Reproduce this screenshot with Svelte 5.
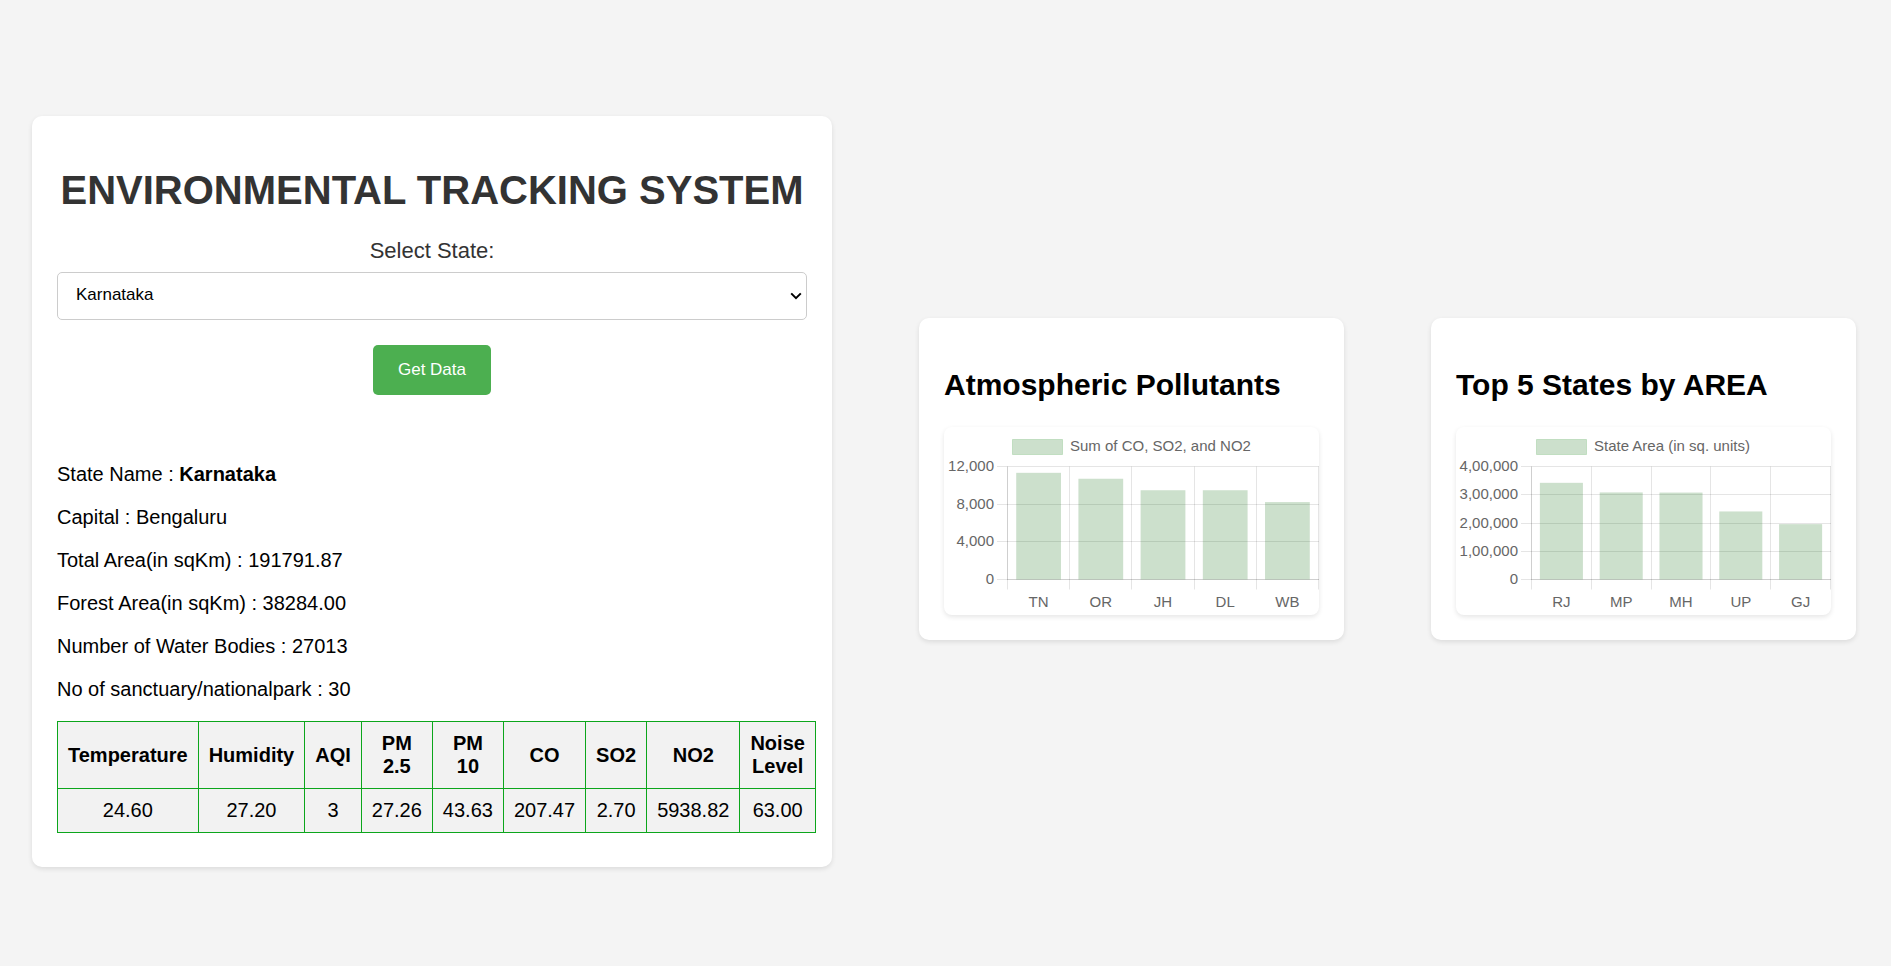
<script>
  const states = ['Karnataka', 'Kerala', 'Tamil Nadu', 'Rajasthan', 'Odisha'];
  let selected = $state('Karnataka');

  const facts = [
    ['Capital', 'Bengaluru'],
    ['Total Area(in sqKm)', '191791.87'],
    ['Forest Area(in sqKm)', '38284.00'],
    ['Number of Water Bodies', '27013'],
    ['No of sanctuary/nationalpark', '30']
  ];

  const readings = [
    ['Temperature', '24.60'],
    ['Humidity', '27.20'],
    ['AQI', '3'],
    ['PM 2.5', '27.26'],
    ['PM 10', '43.63'],
    ['CO', '207.47'],
    ['SO2', '2.70'],
    ['NO2', '5938.82'],
    ['Noise Level', '63.00']
  ];

  const W = 375;
  const TOP = 39.5;
  const BASE = 152.5;

  const charts = [
    {
      title: 'Atmospheric Pollutants',
      legend: 'Sum of CO, SO2, and NO2',
      legendX: 68,
      left: 63,
      max: 12000,
      ticks: [[12000, '12,000'], [8000, '8,000'], [4000, '4,000'], [0, '0']],
      bars: [['TN', 11330], ['OR', 10700], ['JH', 9480], ['DL', 9480], ['WB', 8220]]
    },
    {
      title: 'Top 5 States by AREA',
      legend: 'State Area (in sq. units)',
      legendX: 80,
      left: 75,
      max: 400000,
      ticks: [[400000, '4,00,000'], [300000, '3,00,000'], [200000, '2,00,000'], [100000, '1,00,000'], [0, '0']],
      bars: [['RJ', 342239], ['MP', 308245], ['MH', 307713], ['UP', 240928], ['GJ', 196024]]
    }
  ];

  const yOf = (c, v) => BASE - (v / c.max) * (BASE - TOP);
  const step = (c) => (W - 1 - c.left) / c.bars.length;
</script>

<main>
  <section class="card panel">
    <h1>ENVIRONMENTAL TRACKING SYSTEM</h1>
    <form onsubmit={(e) => e.preventDefault()}>
      <label for="state">Select State:</label>
      <select id="state" bind:value={selected}>
        {#each states as s}
          <option value={s}>{s}</option>
        {/each}
      </select>
      <button type="submit">Get Data</button>
    </form>
    <div class="result">
      <p>State Name : <b>Karnataka</b></p>
      {#each facts as [name, value]}
        <p>{name} : {value}</p>
      {/each}
      <table>
        <thead>
          <tr>
            {#each readings as [name]}<th scope="col">{name}</th>{/each}
          </tr>
        </thead>
        <tbody>
          <tr>
            {#each readings as [, value]}<td>{value}</td>{/each}
          </tr>
        </tbody>
      </table>
    </div>
  </section>

  {#each charts as c}
    <section class="card chart">
      <h2>{c.title}</h2>
      <svg viewBox="0 0 375 188" role="img" aria-label={c.title}>
        <rect class="swatch" x={c.legendX + 0.5} y="12.5" width="50" height="15" />
        <text x={c.legendX + 58} y="24">{c.legend}</text>

        {#each c.ticks as [v, label]}
          {@const y = Math.floor(yOf(c, v)) + 0.5}
          <line class:axis={v === 0} x1={c.left} x2={W} y1={y} y2={y} />
          <line x1={c.left - 10} x2={c.left} y1={y} y2={y} />
          <text class="end" x={c.left - 13} y={y + 4}>{label}</text>
        {/each}
        {#each [0, 1, 2, 3, 4, 5] as i}
          {@const x = Math.round(c.left + i * step(c)) + 0.5}
          <line class:axis={i === 0} x1={x} x2={x} y1={TOP} y2={BASE} />
          <line x1={x} x2={x} y1={BASE} y2={BASE + 10} />
        {/each}

        {#each c.bars as [name, v], i}
          {@const mid = c.left + (i + 0.5) * step(c) + 0.5}
          {@const w = step(c) * 0.72}
          <rect class="bar" x={mid - w / 2} y={yOf(c, v)} width={w} height={BASE - yOf(c, v)} />
          <text class="mid" x={mid} y="180">{name}</text>
        {/each}
      </svg>
    </section>
  {/each}
</main>

<style>
  :global(body) {
    background: #f4f4f4;
  }

  main {
    box-sizing: border-box;
    min-height: 100vh;
    padding: 17px 35px 0 32px;
    display: flex;
    align-items: center;
    justify-content: space-between;
    font: 20px 'Liberation Sans', Arial, sans-serif;
    color: #000;
  }

  .card {
    box-sizing: border-box;
    padding: 25px;
    background: #fff;
    border-radius: 10px;
    box-shadow: 0 2px 5px rgba(0, 0, 0, 0.1);
  }

  .panel {
    flex: 0 1 800px;
    min-width: 0;
    padding-bottom: 34px;
  }

  .chart {
    flex: 0 1 425px;
    min-width: 0;
    margin-bottom: 25px;
  }

  h1 {
    margin: 27px 0 25px;
    font-size: 40px;
    color: #333;
    text-align: center;
  }

  h2 {
    margin: 25px 0;
    font-size: 30px;
  }

  form {
    display: flex;
    flex-direction: column;
    align-items: center;
  }

  label {
    margin-bottom: 8px;
    font-size: 22px;
    color: #333;
  }

  select {
    appearance: none;
    box-sizing: border-box;
    width: 100%;
    padding: 12px 18px 14px;
    border: 1px solid #ccc;
    border-radius: 5px;
    background: #fff url("data:image/svg+xml,%3Csvg xmlns='http://www.w3.org/2000/svg' width='12' height='8' fill='none' stroke='black' stroke-width='2'%3E%3Cpath d='M1.2 1.4 6 6.2 10.800 1.4'/%3E%3C/svg%3E") no-repeat right 4px center;
    color: #000;
    font: 17px 'Liberation Sans', Arial, sans-serif;
    line-height: 20px;
  }

  button {
    margin-top: 25px;
    padding: 15px 25px;
    border: 0;
    border-radius: 5px;
    background: #4caf50;
    color: #fff;
    font: 17px 'Liberation Sans', Arial, sans-serif;
    line-height: 20px;
    cursor: pointer;
  }

  .result {
    margin-top: 68px;
  }

  p {
    margin: 0 0 20px;
  }

  table {
    width: 100%;
    border-collapse: collapse;
    text-align: center;
  }

  th,
  td {
    padding: 10px;
    border: 1px solid #0ca61c;
    background: #f2f2f2;
  }

  svg {
    display: block;
    width: 100%;
    border-radius: 8px;
    background: #fff;
    box-shadow: 0 2px 5px rgba(0, 0, 0, 0.1);
    font-size: 15px;
  }

  svg text {
    fill: #666;
  }

  .end {
    text-anchor: end;
  }

  .mid {
    text-anchor: middle;
  }

  line {
    stroke: rgba(0, 0, 0, 0.1);
  }

  line.axis {
    stroke: rgba(0, 0, 0, 0.19);
  }

  .bar,
  .swatch {
    fill: rgba(0, 100, 0, 0.2);
  }

  .swatch {
    stroke: rgba(0, 128, 0, 0.16);
  }
</style>
